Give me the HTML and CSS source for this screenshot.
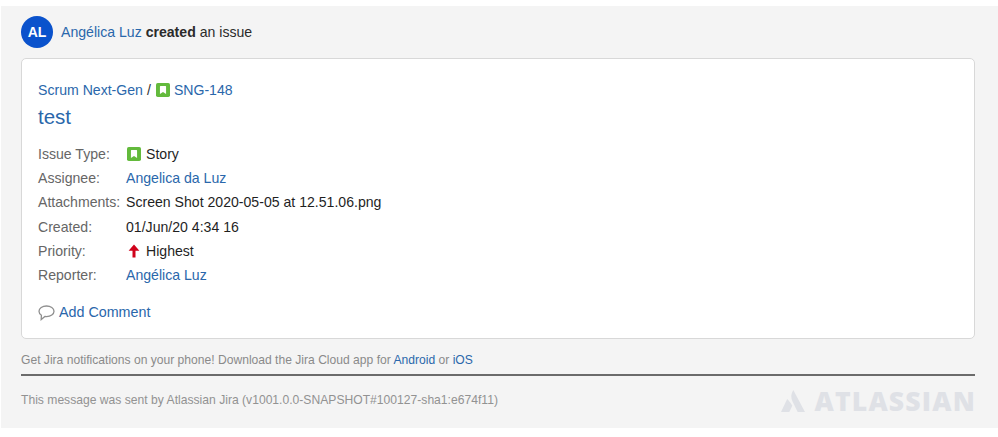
FILE: index.html
```html
<!DOCTYPE html>
<html lang="en">
<head>
<meta charset="utf-8">
<title>Jira notification</title>
<link rel="stylesheet" href="styles.css">
</head>
<body>
<main class="panel">
  <header class="actor">
    <span class="avatar">AL</span>
    <p class="actor-text"><a href="#">Angélica Luz</a> <strong>created</strong> an issue</p>
  </header>
  <section class="card">
    <p class="crumbs"><a href="#">Scrum Next-Gen</a> <span class="sep">/</span>
      <svg class="story" viewBox="0 0 16 16"><rect width="16" height="16" rx="2" fill="#63ba3c"/><path d="M5 3.500h6a.5.5 0 0 1 .5.5v8.500L8 10.200 4.500 12.500V4a.5.5 0 0 1 .5-.5z" fill="#fff"/></svg>
      <a href="#">SNG-148</a></p>
    <h1 class="title"><a href="#">test</a></h1>
    <dl class="fields">
      <dt>Issue Type:</dt>
      <dd><svg class="story" viewBox="0 0 16 16"><rect width="16" height="16" rx="2" fill="#63ba3c"/><path d="M5 3.500h6a.5.5 0 0 1 .5.5v8.500L8 10.200 4.500 12.500V4a.5.5 0 0 1 .5-.5z" fill="#fff"/></svg><span>Story</span></dd>
      <dt>Assignee:</dt>
      <dd><a href="#">Angelica da Luz</a></dd>
      <dt>Attachments:</dt>
      <dd>Screen Shot 2020-05-05 at 12.51.06.png</dd>
      <dt>Created:</dt>
      <dd>01/Jun/20 4:34 16</dd>
      <dt>Priority:</dt>
      <dd><svg class="story" viewBox="0 0 14 14"><path d="M7 .5 12.400 6.700H8.500V13.500H5.500V6.700H1.600z" fill="#d0021b"/></svg><span>Highest</span></dd>
      <dt>Reporter:</dt>
      <dd><a href="#">Angélica Luz</a></dd>
    </dl>
    <p class="comment">
      <svg class="bubble" viewBox="0 0 17 16"><path d="M8.500 1C4.300 1 1 3.300 1 6.300c0 1.600.9 3 2.400 3.900L3.200 14.500l3.700-3c.5.100 1.100.100 1.600.100 4.200 0 7.500-2.300 7.500-5.300S12.700 1 8.500 1z" fill="none" stroke="#8f8f8f" stroke-width="1.300"/></svg>
      <a href="#">Add Comment</a></p>
  </section>
  <p class="note">Get Jira notifications on your phone! Download the Jira Cloud app for <a href="#">Android</a> or <a href="#">iOS</a></p>
  <footer class="foot">
    <p class="sent">This message was sent by Atlassian Jira (v1001.0.0-SNAPSHOT#100127-sha1:e674f11)</p>
    <div class="brand">
      <svg class="brand-mark" viewBox="0 0 24 24"><path d="M12.300 1C9.800 5 9.700 8.800 11.500 12.500L16.700 23H24z" fill="#dfe1e6"/><path d="M7 10.800c-.5-.7-1-.6-1.300.1L0 23h8.300l3-6.200C10 14 8.600 12.800 7 10.800z" fill="#dfe1e6"/></svg>
      <span class="brand-name">ATLASSIAN</span>
    </div>
  </footer>
</main>
</body>
</html>
```
FILE: styles.css
```css
* { box-sizing: border-box; }
html, body { margin: 0; background: #fff; }
body { font-family: "Liberation Sans", Arial, sans-serif; font-size: 14.100px; color: #1f1f1f; padding: 6px 0 9px 1px; }
p, h1, dl, dd { margin: 0; }
a { color: #2a67ab; text-decoration: none; }
.panel { background: #f4f4f4; height: 422px; padding: 10px 23px 0 20px; }
.actor { display: flex; align-items: center; gap: 8px; height: 32px; }
.avatar { width: 32px; height: 32px; border-radius: 50%; background: #0a52cc; color: #fff; font-weight: 700; font-size: 14px; display: flex; align-items: center; justify-content: center; }
.actor-text { line-height: 32px; color: #2b2b2b; }
.card { background: #fff; border: 1px solid #d8d8d8; border-radius: 5px; margin-top: 10px; height: 281px; padding: 21px 16px 0; }
.crumbs { display: flex; align-items: center; gap: 4px; line-height: 20px; white-space: pre; }
.sep { color: #333; }
.story { width: 14px; height: 14px; flex: none; }
.crumbs .story { margin: 0 0 0 1px; }
.title { font-size: 20.500px; font-weight: 400; line-height: 28px; margin-top: 3px; }
.fields { display: grid; grid-template-columns: 88px 1fr; grid-auto-rows: 24.2px; margin-top: 11px; align-items: center; }
.fields dt { color: #666; white-space: nowrap; }
.fields dd { display: flex; align-items: center; gap: 5px; }
.fields dd .story { margin-left: 1px; }
.comment { display: flex; align-items: center; gap: 4px; margin-top: 15px; line-height: 20px; font-size: 14.300px; }
.bubble { width: 17px; height: 16px; flex: none; margin-top: 2px; }
.note { font-size: 12.100px; color: #8a8a8a; margin-top: 13px; line-height: 16px; padding-bottom: 6px; border-bottom: 2px solid #6b6b6b; }
.foot { display: flex; justify-content: space-between; align-items: center; margin-top: 11px; height: 26px; }
.sent { font-size: 12.130px; color: #929292; }
.brand { display: flex; align-items: flex-end; gap: 9px; margin-top: 2px; }
.brand-mark { width: 24px; height: 24px; flex: none; }
.brand-name { font-family: "Open Sans", "Liberation Sans", sans-serif; font-weight: 800; font-size: 26.500px; letter-spacing: 1.200px; margin-right: -1px; color: #dfe1e6; line-height: 24px; }
```
